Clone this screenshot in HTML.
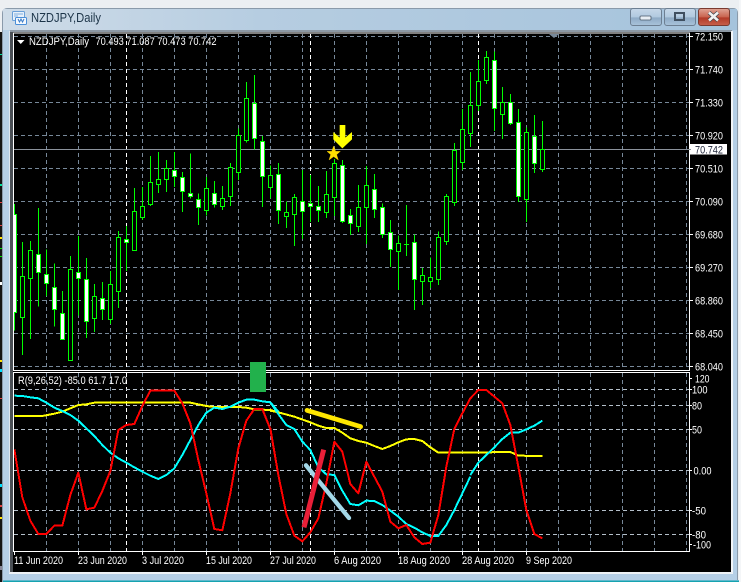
<!DOCTYPE html>
<html>
<head>
<meta charset="utf-8">
<style>
html,body{margin:0;padding:0;width:741px;height:582px;overflow:hidden;background:#e8e8e8}
svg{display:block}
text{font-family:"Liberation Sans",sans-serif}
.ax{font-size:11px;fill:#fff}
.gh{stroke:#778899;stroke-width:1;stroke-dasharray:4 3;fill:none}
.gw{stroke:#fff;stroke-width:1;stroke-dasharray:4 3;fill:none}
</style>
</head>
<body>
<svg width="741" height="582" viewBox="0 0 741 582" xmlns="http://www.w3.org/2000/svg">
<defs>
<linearGradient id="btn" x1="0" y1="0" x2="0" y2="1"><stop offset="0" stop-color="#c6d8e9"/><stop offset=".5" stop-color="#b1c9df"/><stop offset=".55" stop-color="#8fabc6"/><stop offset="1" stop-color="#a9c3db"/></linearGradient>
<linearGradient id="tbx" x1="0" y1="0" x2="1" y2="0"><stop offset="0" stop-color="#cfdce8"/><stop offset=".35" stop-color="#b6cde1"/><stop offset="1" stop-color="#a5c3dc"/></linearGradient>
<linearGradient id="cl" x1="0" y1="0" x2="0" y2="1"><stop offset="0" stop-color="#e0a697"/><stop offset=".5" stop-color="#c9634f"/><stop offset=".55" stop-color="#b23a28"/><stop offset="1" stop-color="#c7604c"/></linearGradient>
<clipPath id="cm"><rect x="14" y="34" width="675" height="336"/></clipPath>
<clipPath id="ci"><rect x="14" y="373" width="675" height="178"/></clipPath>
</defs>

<!-- desktop behind -->
<rect x="0" y="0" width="741" height="582" fill="#eceff2"/>
<rect x="0" y="32" width="3" height="550" fill="#141414"/>
<rect x="0" y="54" width="2" height="1" fill="#00e0a0"/><rect x="0" y="184" width="2" height="2" fill="#00e0a0"/><rect x="0" y="202" width="2" height="1" fill="#e04040"/><rect x="0" y="225" width="2" height="1" fill="#e04040"/><rect x="0" y="237" width="2" height="2" fill="#ffe000"/><rect x="0" y="248" width="2" height="1" fill="#00e000"/><rect x="0" y="256" width="2" height="1" fill="#00e000"/><rect x="0" y="282" width="2" height="3" fill="#fff"/><rect x="0" y="360" width="2" height="2" fill="#ffe000"/><rect x="0" y="369" width="2" height="3" fill="#00e0ff"/><rect x="0" y="398" width="2" height="1" fill="#e04040"/><rect x="0" y="484" width="2" height="3" fill="#00e0ff"/><rect x="0" y="505" width="2" height="2" fill="#e04040"/><rect x="0" y="517" width="2" height="2" fill="#ffe000"/><rect x="0" y="566" width="2" height="4" fill="#889"/>
<rect x="739" y="0" width="2" height="582" fill="#f4f6f8"/>

<!-- window frame -->
<path d="M2 582V14Q2 8 8 8H733Q738 8 738 14V582Z" fill="#b5cfe6"/>
<path d="M2.5 582V14Q2.5 8.5 8 8.5H733Q737.5 8.5 737.5 14V582" fill="none" stroke="#8a9aaa" stroke-width="1"/>
<rect x="3" y="9" width="734" height="21" fill="url(#tbx)"/>
<rect x="3" y="581" width="736" height="1" fill="#16a3b0"/>
<rect x="3" y="580" width="736" height="1" fill="#5fb8cc"/>
<rect x="10" y="30" width="722" height="2" fill="#8c98a4"/>
<rect x="10" y="32" width="3" height="541" fill="#4a4f55"/>
<rect x="13" y="32" width="718" height="541" fill="#000"/>
<rect x="731" y="31" width="2" height="543" fill="#f2f5f8"/>
<rect x="9" y="572" width="724" height="2" fill="#eef2f6"/>
<rect x="9" y="31" width="1" height="542" fill="#dfe7ef"/>

<!-- title icon -->
<g>
<rect x="12.5" y="11.5" width="12" height="9" rx="1" fill="#e8f1fa" stroke="#6aa0d8"/>
<rect x="15.5" y="17.5" width="11" height="7" rx="1" fill="#f5f9fd" stroke="#4a8ed8"/>
<path d="M18 19l1.5 3 1.5-3 1.5 3 1.5-3" fill="none" stroke="#3a7cc8" stroke-width="1"/>
<path d="M14 14h9M14 16h4" stroke="#7fb0e0" stroke-width="1"/>
</g>
<text x="31" y="22" font-size="13" fill="#1c3448" textLength="70" lengthAdjust="spacingAndGlyphs">NZDJPY,Daily</text>

<!-- window buttons -->
<rect x="630.5" y="8.5" width="31" height="17" rx="2.5" fill="url(#btn)" stroke="#6d7f92"/>
<rect x="640" y="16" width="11" height="4" rx="1" fill="#e8eef4" stroke="#4a5a6a" stroke-width=".8"/>
<rect x="664.5" y="8.5" width="31" height="17" rx="2.5" fill="url(#btn)" stroke="#6d7f92"/>
<rect x="675" y="13" width="9" height="7" fill="none" stroke="#3f4f60" stroke-width="2"/>
<rect x="698.5" y="8.5" width="31" height="17" rx="2.5" fill="url(#cl)" stroke="#7a3a30"/>
<path d="M709 12.500l9 8M718 12.500l-9 8" stroke="#3d4650" stroke-width="4"/>
<path d="M709 12.500l9 8M718 12.500l-9 8" stroke="#f2f2f2" stroke-width="2.600"/>

<!-- chart frames -->
<path d="M13.500 33H689.500V370.500H13.500ZM13.500 372.500H689.500V551.500H13.500Z" fill="none" stroke="#fff" stroke-width="1"/>

<!-- main grid -->
<g clip-path="url(#cm)" shape-rendering="crispEdges">
<path class="gh" d="M14 36.500H689M14 69.500H689M14 102.500H689M14 135.500H689M14 168.500H689M14 201.500H689M14 234.500H689M14 267.500H689M14 300.500H689M14 333.500H689M14 366.500H689"/>
<path class="gh" d="M46.500 34V370M78.500 34V370M110.500 34V370M142.500 34V370M174.500 34V370M206.500 34V370M238.500 34V370M270.500 34V370M302.500 34V370M334.500 34V370M366.500 34V370M398.500 34V370M430.500 34V370M462.500 34V370M494.500 34V370M526.500 34V370M558.500 34V370M590.500 34V370M622.500 34V370M654.500 34V370M686.500 34V370"/>
<path class="gw" d="M126.500 34V370M310.500 34V370M478.500 34V370"/>
<path d="M14 149.500H689" stroke="#8b929c" stroke-width="1"/>
</g>

<!-- candles -->
<g clip-path="url(#cm)">
<g shape-rendering="crispEdges" fill="none" stroke="#00ff00" stroke-width="1">
<g transform="translate(0 130) scale(.33333)" stroke-width="3">
<path d="M43.500 222V602M67.500 336V675M91.500 333V627M115.500 234V530M139.500 358V498M163.500 400V590M187.500 483V628M211.500 378V692M235.500 318V556M259.500 384V624M283.500 462V606M307.500 456V570M331.500 423V582M355.500 303V534M379.500 288V423M403.500 174V361M427.500 171V270M451.500 78V228M475.500 66V189M499.500 90V186M523.500 66V171M547.500 126V246"/>
<path fill="#000" d="M61.500 439h12V563h-12zM85.500 361h12V445h-12zM205.500 418h12V692h-12zM277.500 499h12V566h-12zM325.500 463h12V569h-12zM349.500 322h12V484h-12zM397.500 244h12V361h-12zM421.500 229h12V262h-12zM445.500 157h12V223h-12zM469.500 148h12V163h-12zM493.500 115h12V148h-12z"/>
<path fill="#fff" d="M37.500 254h12V547h-12zM109.500 373h12V427h-12zM133.500 433h12V460h-12zM157.500 472h12V538h-12zM181.500 550h12V628h-12zM229.500 427h12V445h-12zM253.500 448h12V574h-12zM301.500 505h12V538h-12zM373.500 328h12V337h-12zM517.500 121h12V139h-12zM541.500 142h12V184h-12z"/>
</g>
<g transform="translate(190 60) scale(.33333)" stroke-width="3">
<path d="M1.500 280V415M25.500 400V495M49.500 351V466M73.500 363V443M97.500 378V450M121.500 309V438M145.500 205V360M169.500 66V248M193.500 45V268M217.500 228V441M241.500 316V415M265.500 309V492M289.500 425V504M313.500 402V558M337.500 330V537M361.500 345V486M385.500 378V486M409.500 333V474M433.500 297V468M457.500 300V489M481.500 447V525M505.500 375V516M529.500 318V552M553.500 342V474"/>
<path fill="#000" d="M43.500 385h12V451h-12zM91.500 415h12V440h-12zM115.500 322h12V409h-12zM139.500 226h12V338h-12zM163.500 115h12V242h-12zM235.500 346h12V382h-12zM283.500 457h12V470h-12zM307.500 412h12V464h-12zM403.500 403h12V457h-12zM427.500 310h12V412h-12zM499.500 442h12V499h-12zM523.500 376h12V442h-12z"/>
<path fill="#fff" d="M-4.500 400h12V409h-12zM19.500 418h12V442h-12zM67.500 400h12V433h-12zM187.500 130h12V235h-12zM211.500 244h12V349h-12zM259.500 343h12V451h-12zM331.500 425h12V454h-12zM355.500 430h12V439h-12zM379.500 439h12V451h-12zM451.500 316h12V484h-12zM475.500 466h12V490h-12zM547.500 388h12V448h-12z"/>
</g>
<g transform="translate(380 40) scale(.33333)" stroke-width="3">
<path d="M7.500 490V594M31.500 540V681M55.500 586V750M79.500 495V648M103.500 583V810M127.500 684V795M151.500 652V744M175.500 574V735M199.500 462V615M223.500 309V498M247.500 207V390M271.500 96V321M295.500 60V213M319.500 33V132M343.500 34V273M367.500 141V297M391.500 162V255M415.500 207V486M439.500 262V546M463.500 225V399M487.500 243V396M72 613H87"/>
<path fill="#000" d="M49.500 610h12V634h-12zM121.500 706h12V724h-12zM145.500 712h12V724h-12zM169.500 592h12V718h-12zM193.500 469h12V604h-12zM217.500 331h12V487h-12zM241.500 268h12V367h-12zM265.500 196h12V280h-12zM289.500 124h12V196h-12zM313.500 52h12V121h-12zM361.500 187h12V223h-12zM433.500 277h12V478h-12zM481.500 328h12V388h-12z"/>
<path fill="#fff" d="M1.500 502h12V583h-12zM25.500 577h12V628h-12zM97.500 607h12V718h-12zM337.500 61h12V205h-12zM385.500 187h12V250h-12zM409.500 247h12V469h-12zM457.500 289h12V370h-12z"/>
</g>
</g>
</g>

<!-- arrow and star -->
<g transform="translate(190 60) scale(.33333)">
<path d="M449 195H466V233L486 216V238L457 265L430 238V216L449 233Z" fill="#ffff00"/>
<path d="M431 258L437 274H451L440 284L445 300L431 290L417 300L422 284L411 274H425Z" fill="#ffe000" stroke="#ffd000"/>
</g>

<!-- header text -->
<path d="M17 40H24.500L20.750 44Z" fill="#fff"/>
<text x="29" y="45" font-size="11" fill="#fff" textLength="60" lengthAdjust="spacingAndGlyphs">NZDJPY,Daily</text>
<text x="95.500" y="45" font-size="11" fill="#fff" textLength="121" lengthAdjust="spacingAndGlyphs">70.493 71.087 70.473 70.742</text>
<path d="M549 34H559L554 38Z" fill="#778899"/>

<!-- price axis -->
<path d="M689 36.500h4M689 69.500h4M689 102.500h4M689 135.500h4M689 168.500h4M689 201.500h4M689 234.500h4M689 267.500h4M689 300.500h4M689 333.500h4M689 366.500h4" stroke="#fff" shape-rendering="crispEdges"/>
<text class="ax" x="695" y="40.500" textLength="28" lengthAdjust="spacingAndGlyphs">72.150</text>
<text class="ax" x="695" y="73.500" textLength="28" lengthAdjust="spacingAndGlyphs">71.740</text>
<text class="ax" x="695" y="106.500" textLength="28" lengthAdjust="spacingAndGlyphs">71.330</text>
<text class="ax" x="695" y="139.500" textLength="28" lengthAdjust="spacingAndGlyphs">70.920</text>
<text class="ax" x="695" y="172.500" textLength="28" lengthAdjust="spacingAndGlyphs">70.510</text>
<text class="ax" x="695" y="205.500" textLength="28" lengthAdjust="spacingAndGlyphs">70.090</text>
<text class="ax" x="695" y="238.500" textLength="28" lengthAdjust="spacingAndGlyphs">69.680</text>
<text class="ax" x="695" y="271.500" textLength="28" lengthAdjust="spacingAndGlyphs">69.270</text>
<text class="ax" x="695" y="304.500" textLength="28" lengthAdjust="spacingAndGlyphs">68.860</text>
<text class="ax" x="695" y="337.500" textLength="28" lengthAdjust="spacingAndGlyphs">68.450</text>
<text class="ax" x="695" y="370.500" textLength="28" lengthAdjust="spacingAndGlyphs">68.040</text>
<rect x="690" y="144" width="37" height="10.500" fill="#fff"/>
<path d="M689 149.500h2" stroke="#8b929c"/>
<text x="695" y="153.500" font-size="11" fill="#20263a" textLength="28" lengthAdjust="spacingAndGlyphs">70.742</text>

<!-- indicator grid -->
<g clip-path="url(#ci)" shape-rendering="crispEdges">
<path class="gh" d="M46.500 373V551M78.500 373V551M110.500 373V551M142.500 373V551M174.500 373V551M206.500 373V551M238.500 373V551M270.500 373V551M302.500 373V551M334.500 373V551M366.500 373V551M398.500 373V551M430.500 373V551M462.500 373V551M494.500 373V551M526.500 373V551M558.500 373V551M590.500 373V551M622.500 373V551M654.500 373V551M686.500 373V551"/>
<path class="gw" d="M126.500 373V551M310.500 373V551M478.500 373V551"/>
<path class="gw" d="M14 389.500H689M14 405.500H689M14 429.500H689M14 470.500H689M14 510.500H689M14 534.500H689" style="stroke:#b4bfca"/>
</g>

<!-- green block -->
<rect x="250" y="362" width="16" height="30" fill="#22b14c"/>

<!-- indicator lines -->
<g clip-path="url(#ci)" fill="none" stroke-width="6" stroke-linejoin="round" shape-rendering="crispEdges">
<g transform="translate(0 360) scale(.33333)">
<path stroke="#ffff00" d="M43 168L127 168L163 161L187 155L211 145L235 135L259 133L283 128L571 128L595 133L619 138L643 141L715 141L739 143L763 148L811 150L835 157"/>
<path stroke="#00ffff" d="M43 107L67 108L91 112L115 115L139 128L163 143L187 153L211 165L235 182L259 205L283 228L307 255L331 278L355 295L379 308L403 322L427 335L451 347L475 357L499 345L523 325L547 285L571 240L595 195L619 158L643 143L667 147L691 140L715 128L739 119L763 119L787 124L811 127L835 155"/>
<path stroke="#ff0000" d="M43 268L67 412L91 482L115 522L139 522L163 497L187 497L211 405L235 338L259 448L283 443L307 393L331 333L355 210L379 195L403 192L427 138L451 92L523 92L547 130L571 190L595 300L619 400L643 507L667 511L691 400L715 265L739 182L763 147L787 147L811 207L835 345"/>
</g>
<g transform="translate(270 360) scale(.33333)">
<path stroke="#ffff00" d="M1 152L25 157L73 170L121 187L145 197L169 204L193 204L217 218L241 235L265 243L289 248L313 258L337 267L361 258L385 247L409 238L433 237L457 243L481 262L505 278L601 278"/>
<path stroke="#00ffff" d="M1 127L25 162L49 195L73 207L97 245L121 270L145 322L169 343L193 345L217 392L241 432L265 436L289 422L313 423L337 435L361 452L385 470L409 492L433 503L457 517L481 528L505 528L529 495L553 450L577 400L601 350"/>
<path stroke="#ff0000" d="M1 205L25 345L49 462L73 527L97 544L121 517L145 475L169 370L193 245L217 275L241 372L265 400L289 305L313 350L337 395L361 485L385 505L409 495L433 532L457 552L481 548L505 465L529 320L553 207L577 160L601 115"/>
</g>
<g transform="translate(460 360) scale(.33333)">
<path stroke="#ffff00" d="M31 278L79 277L151 276L175 287L247 288"/>
<path stroke="#00ffff" d="M31 345L55 308L79 285L103 262L127 237L151 218L175 218L199 208L223 197L247 182"/>
<path stroke="#ff0000" d="M31 115L55 90L79 90L103 110L127 130L151 195L175 320L199 450L223 522L247 535"/>
</g>
</g>

<!-- hand drawn lines -->
<g transform="translate(270 360) scale(.33333)" fill="none" stroke-linecap="round">
<path stroke="#ffe600" stroke-width="14" d="M111 151L272 200"/>
<path stroke="#a3d8e8" stroke-width="13" d="M108 316L237 474"/>
<path stroke="#ea1f38" stroke-width="15" stroke-linecap="butt" d="M102 502L161 269"/>
</g>

<!-- indicator header -->
<text x="18" y="384" font-size="11" fill="#fff" textLength="109" lengthAdjust="spacingAndGlyphs">R(9,26,52) -85.0 61.7 17.0</text>

<!-- indicator axis -->
<path d="M689 378.500h3M689 389.500h3M689 405.500h3M689 429.500h3M689 470.500h3M689 510.500h3M689 534.500h3M689 544.500h3" stroke="#fff" shape-rendering="crispEdges"/>
<text class="ax" x="695" y="382.500" textLength="14.500" lengthAdjust="spacingAndGlyphs">120</text>
<text class="ax" x="692" y="393.500" textLength="15.500" lengthAdjust="spacingAndGlyphs">100</text>
<text class="ax" x="692" y="409.500" textLength="10" lengthAdjust="spacingAndGlyphs">80</text>
<text class="ax" x="692" y="433.500" textLength="10" lengthAdjust="spacingAndGlyphs">50</text>
<text class="ax" x="693.500" y="474.500" textLength="18" lengthAdjust="spacingAndGlyphs">0.00</text>
<text class="ax" x="692" y="514.500" textLength="14" lengthAdjust="spacingAndGlyphs">-50</text>
<text class="ax" x="692" y="538.500" textLength="14" lengthAdjust="spacingAndGlyphs">-80</text>
<text class="ax" x="693" y="548.500" textLength="18" lengthAdjust="spacingAndGlyphs">-100</text>

<!-- time axis -->
<path d="M14.500 551v4M78.500 551v4M142.500 551v4M206.500 551v4M270.500 551v4M334.500 551v4M398.500 551v4M462.500 551v4M526.500 551v4" stroke="#fff" shape-rendering="crispEdges"/>
<text class="ax" x="14" y="564" textLength="49" lengthAdjust="spacingAndGlyphs">11 Jun 2020</text>
<text class="ax" x="78" y="564" textLength="49" lengthAdjust="spacingAndGlyphs">23 Jun 2020</text>
<text class="ax" x="142" y="564" textLength="42" lengthAdjust="spacingAndGlyphs">3 Jul 2020</text>
<text class="ax" x="206" y="564" textLength="46" lengthAdjust="spacingAndGlyphs">15 Jul 2020</text>
<text class="ax" x="270" y="564" textLength="46" lengthAdjust="spacingAndGlyphs">27 Jul 2020</text>
<text class="ax" x="334" y="564" textLength="47" lengthAdjust="spacingAndGlyphs">6 Aug 2020</text>
<text class="ax" x="398" y="564" textLength="52" lengthAdjust="spacingAndGlyphs">18 Aug 2020</text>
<text class="ax" x="462" y="564" textLength="52" lengthAdjust="spacingAndGlyphs">28 Aug 2020</text>
<text class="ax" x="526" y="564" textLength="46" lengthAdjust="spacingAndGlyphs">9 Sep 2020</text>
</svg>
</body>
</html>
